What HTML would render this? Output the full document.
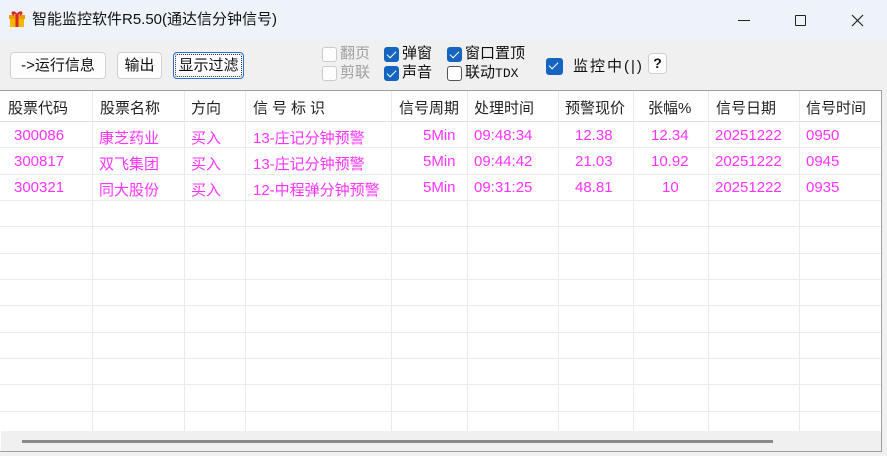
<!DOCTYPE html>
<html><head><meta charset="utf-8"><style>
*{margin:0;padding:0;box-sizing:border-box}
body{width:887px;height:456px;overflow:hidden;background:#f0f0f0;font-family:"Liberation Sans","Noto Sans CJK SC",sans-serif;position:relative;color:#111}
.a{position:absolute;white-space:nowrap}
#title{left:0;top:0;width:887px;height:40px;background:#eef3f9}
.btn{position:absolute;height:27px;background:#fdfdfd;border:1px solid #d0d0d0;border-radius:4px;font-size:15px;text-align:center;line-height:25px}
.cb{position:absolute;width:15px;height:15px;border-radius:3px}
.on{background:#1565c0;border:1px solid #1565c0}
.on:after{content:"";position:absolute;left:4px;top:1px;width:4px;height:8px;border:solid #fff;border-width:0 1.5px 1.5px 0;transform:rotate(45deg)}
.off{background:#fff;border:1px solid #555}
.dis{background:#fff;border:1px solid #ccc}
.lb{position:absolute;font-size:15px;line-height:18px}
#tbl{left:0;top:90px;width:882px;height:362px;background:#fff;border-top:1px solid #a0a0a0;border-right:1px solid #a0a0a0;border-bottom:1px solid #a0a0a0}
.vl{position:absolute;top:91px;height:340px;width:1px;background:#ebebeb}
.hl{position:absolute;left:0;width:881px;height:1px;background:#ebebeb}
.h{position:absolute;top:97px;font-size:15px;color:#222}
.c{position:absolute;font-size:15px;color:#ff33ff}
</style></head><body>
<div class="a" id="title"></div>
<svg class="a" style="left:8px;top:10px" width="18" height="18" viewBox="0 0 18 18"><rect x="2" y="7" width="14" height="10" fill="#f5b700"/><rect x="1" y="5" width="16" height="4" fill="#e8a000"/><rect x="7.5" y="5" width="3" height="12" fill="#d8282a"/><path d="M9 5 C5 0 3 3 6 5 M9 5 C13 0 15 3 12 5" stroke="#d8282a" stroke-width="2" fill="none"/></svg>
<div class="a" style="left:32px;top:10px;font-size:15px;line-height:20px">智能监控软件R5.50(通达信分钟信号)</div>
<div class="a" style="left:738px;top:20px;width:12px;height:1px;background:#222"></div>
<div class="a" style="left:795px;top:15px;width:11px;height:11px;border:1px solid #222;border-radius:1px"></div>
<svg class="a" style="left:851px;top:14px" width="13" height="13"><path d="M1 1L12 12M12 1L1 12" stroke="#222" stroke-width="1.2"/></svg>

<div class="btn" style="left:10px;top:52px;width:96px">-&gt;运行信息</div>
<div class="btn" style="left:117px;top:52px;width:45px">输出</div>
<div class="btn" style="left:173px;top:52px;width:71px;border:1px solid #2a6fd0;outline:1px dotted #333;outline-offset:-3px">显示过滤</div>

<div class="cb dis" style="left:322px;top:47px"></div><div class="lb" style="left:340px;top:45px;color:#a0a0a0">翻页</div>
<div class="cb dis" style="left:322px;top:66px"></div><div class="lb" style="left:340px;top:64px;color:#a0a0a0">剪联</div>
<div class="cb on" style="left:384px;top:47px"></div><div class="lb" style="left:402px;top:45px">弹窗</div>
<div class="cb on" style="left:384px;top:66px"></div><div class="lb" style="left:402px;top:64px">声音</div>
<div class="cb on" style="left:447px;top:47px"></div><div class="lb" style="left:465px;top:45px">窗口置顶</div>
<div class="cb off" style="left:447px;top:66px"></div><div class="lb" style="left:465px;top:64px">联动<span style="font-family:'Liberation Mono',monospace;font-size:13px">TDX</span></div>
<div class="cb on" style="left:546px;top:58px;width:17px;height:17px"></div><div class="lb" style="left:573px;top:58px;letter-spacing:2px">监控中(|)</div>
<div class="btn" style="left:648px;top:53px;width:19px;height:21px;line-height:19px;font-weight:bold;font-size:14px">?</div>

<div class="a" id="tbl"></div>
<div class="hl" style="top:121px;background:#e0e0e0"></div>
<div class="hl" style="top:147px"></div><div class="hl" style="top:174px"></div><div class="hl" style="top:200px"></div><div class="hl" style="top:226px"></div><div class="hl" style="top:253px"></div><div class="hl" style="top:279px"></div><div class="hl" style="top:305px"></div><div class="hl" style="top:332px"></div><div class="hl" style="top:358px"></div><div class="hl" style="top:384px"></div><div class="hl" style="top:411px"></div>
<div class="vl" style="left:92px"></div><div class="vl" style="left:184px"></div><div class="vl" style="left:245px"></div><div class="vl" style="left:391px"></div><div class="vl" style="left:467px"></div><div class="vl" style="left:558px"></div><div class="vl" style="left:633px"></div><div class="vl" style="left:708px"></div><div class="vl" style="left:799px"></div>
<div class="a" style="left:1px;top:431px;width:880px;height:20px;background:#f0f0f0"></div>
<div class="a" style="left:22px;top:440px;width:751px;height:3px;background:#8a8a8a"></div>

<div class="h" style="left:8px">股票代码</div><div class="h" style="left:100px">股票名称</div><div class="h" style="left:191px">方向</div><div class="h" style="left:253px;letter-spacing:4px">信号标识</div><div class="h" style="left:399px">信号周期</div><div class="h" style="left:474px">处理时间</div><div class="h" style="left:565px">预警现价</div><div class="h" style="left:648px">张幅%</div><div class="h" style="left:716px">信号日期</div><div class="h" style="left:806px">信号时间</div>

<div class="c" style="left:14px;top:127px">300086</div><div class="c" style="left:99px;top:127px">康芝药业</div><div class="c" style="left:191px;top:127px">买入</div><div class="c" style="left:253px;top:127px">13-庄记分钟预警</div><div class="c" style="left:423px;top:127px">5Min</div><div class="c" style="left:474px;top:127px">09:48:34</div><div class="c" style="left:575px;top:127px">12.38</div><div class="c" style="left:651px;top:127px">12.34</div><div class="c" style="left:715px;top:127px">20251222</div><div class="c" style="left:806px;top:127px">0950</div>
<div class="c" style="left:14px;top:153px">300817</div><div class="c" style="left:99px;top:153px">双飞集团</div><div class="c" style="left:191px;top:153px">买入</div><div class="c" style="left:253px;top:153px">13-庄记分钟预警</div><div class="c" style="left:423px;top:153px">5Min</div><div class="c" style="left:474px;top:153px">09:44:42</div><div class="c" style="left:575px;top:153px">21.03</div><div class="c" style="left:651px;top:153px">10.92</div><div class="c" style="left:715px;top:153px">20251222</div><div class="c" style="left:806px;top:153px">0945</div>
<div class="c" style="left:14px;top:179px">300321</div><div class="c" style="left:99px;top:179px">同大股份</div><div class="c" style="left:191px;top:179px">买入</div><div class="c" style="left:253px;top:179px">12-中程弹分钟预警</div><div class="c" style="left:423px;top:179px">5Min</div><div class="c" style="left:474px;top:179px">09:31:25</div><div class="c" style="left:575px;top:179px">48.81</div><div class="c" style="left:662px;top:179px">10</div><div class="c" style="left:715px;top:179px">20251222</div><div class="c" style="left:806px;top:179px">0935</div>
</body></html>
